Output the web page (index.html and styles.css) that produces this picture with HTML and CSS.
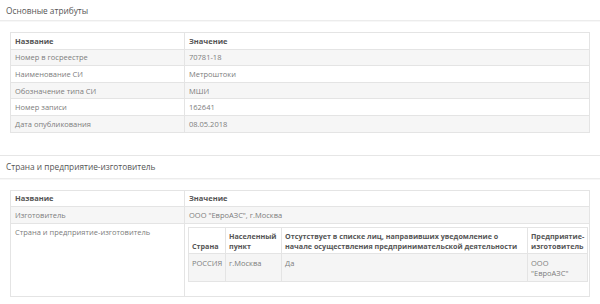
FILE: index.html
```html
<!DOCTYPE html>
<html lang="ru">
<head>
<meta charset="utf-8">
<link rel="stylesheet" href="styles.css">
</head>
<body>
<section class="panel first">
  <div class="panel-heading">Основные атрибуты</div>
  <div class="panel-body">
    <table class="grid">
      <colgroup><col class="c1"><col></colgroup>
      <thead><tr><th>Название</th><th>Значение</th></tr></thead>
      <tbody>
        <tr><td>Номер в госреестре</td><td>70781-18</td></tr>
        <tr><td>Наименование СИ</td><td>Метроштоки</td></tr>
        <tr><td>Обозначение типа СИ</td><td>МШИ</td></tr>
        <tr><td>Номер записи</td><td>162641</td></tr>
        <tr><td>Дата опубликования</td><td>08.05.2018</td></tr>
      </tbody>
    </table>
  </div>
</section>
<section class="panel second">
  <div class="panel-heading">Страна и предприятие-изготовитель</div>
  <div class="panel-body">
    <table class="grid">
      <colgroup><col class="c1"><col></colgroup>
      <thead><tr><th>Название</th><th>Значение</th></tr></thead>
      <tbody>
        <tr><td>Изготовитель</td><td>ООО "ЕвроАЗС", г.Москва</td></tr>
        <tr class="tall">
          <td class="top">Страна и предприятие-изготовитель</td>
          <td class="nest">
            <table class="inner">
              <colgroup><col class="i1"><col class="i2"><col class="i3"><col class="i4"></colgroup>
              <thead>
                <tr>
                  <th>Страна</th>
                  <th>Населенный пункт</th>
                  <th>Отсутствует в списке лиц, направивших уведомление о начале осуществления предпринимательской деятельности</th>
                  <th>Предприятие-изготовитель</th>
                </tr>
              </thead>
              <tbody>
                <tr><td>РОССИЯ</td><td>г.Москва</td><td>Да</td><td>ООО "ЕвроАЗС"</td></tr>
              </tbody>
            </table>
          </td>
        </tr>
      </tbody>
    </table>
  </div>
</section>
</body>
</html>
```
FILE: styles.css
```css
* { box-sizing: border-box; }
html, body { margin: 0; padding: 0; background: #fff; }
body {
  font-family: "Open Sans", "Liberation Sans", sans-serif;
  font-size: 7.5px;
  color: #7d7d7d;
  width: 600px;
}
.panel.second { margin-top: 10px; border-top: 1px solid #e6e6e6; }
.panel-heading {
  font-size: 8.3px;
  color: #555;
  padding-left: 6px;
  border-bottom: 1px solid #ececec;
  box-shadow: 0 1px 0 #f7f7f7;
}
.panel.first .panel-heading { height: 21px; line-height: 21px; }
.panel.second .panel-heading { height: 23px; line-height: 22px; }
.panel-body { padding: 11px 10px 12px 10px; }
.grid {
  width: 580px;
  border-collapse: collapse;
  border: 1px solid #e0e0e0;
  table-layout: fixed;
}
.grid col.c1 { width: 174px; }
.grid th, .grid td {
  border: 1px solid #e4e4e4;
  height: 16.6px;
  padding: 0 4px;
  text-align: left;
  vertical-align: middle;
  line-height: 10px;
  font-weight: normal;
}
.grid th { font-weight: 700; color: #555; }
.grid > tbody > tr:nth-child(odd) > td { background: #f6f6f6; }
.grid > tbody > tr.tall > td { background: #fff; height: 71px; }
.grid td.top { vertical-align: top; padding-top: 3px; }
.grid td.nest { vertical-align: top; padding: 3px 4px 14px 3px; }
.inner {
  width: 399px;
  border-collapse: collapse;
  table-layout: fixed;
  border: 1px solid #e0e0e0;
}
.inner col.i1 { width: 37px; }
.inner col.i2 { width: 56px; }
.inner col.i3 { width: 246px; }
.inner col.i4 { width: 60px; }
.inner th, .inner td {
  border: 1px solid #e4e4e4;
  padding: 3px 3px;
  line-height: 10px;
  text-align: left;
}
.inner th {
  font-weight: 700;
  font-size: 7.2px;
  color: #555;
  vertical-align: bottom;
  height: 26px;
  padding-bottom: 2px;
  background: #fff;
}
.inner td {
  background: #f5f5f5;
  vertical-align: top;
  height: 28px;
  padding-top: 4px;
}
```
